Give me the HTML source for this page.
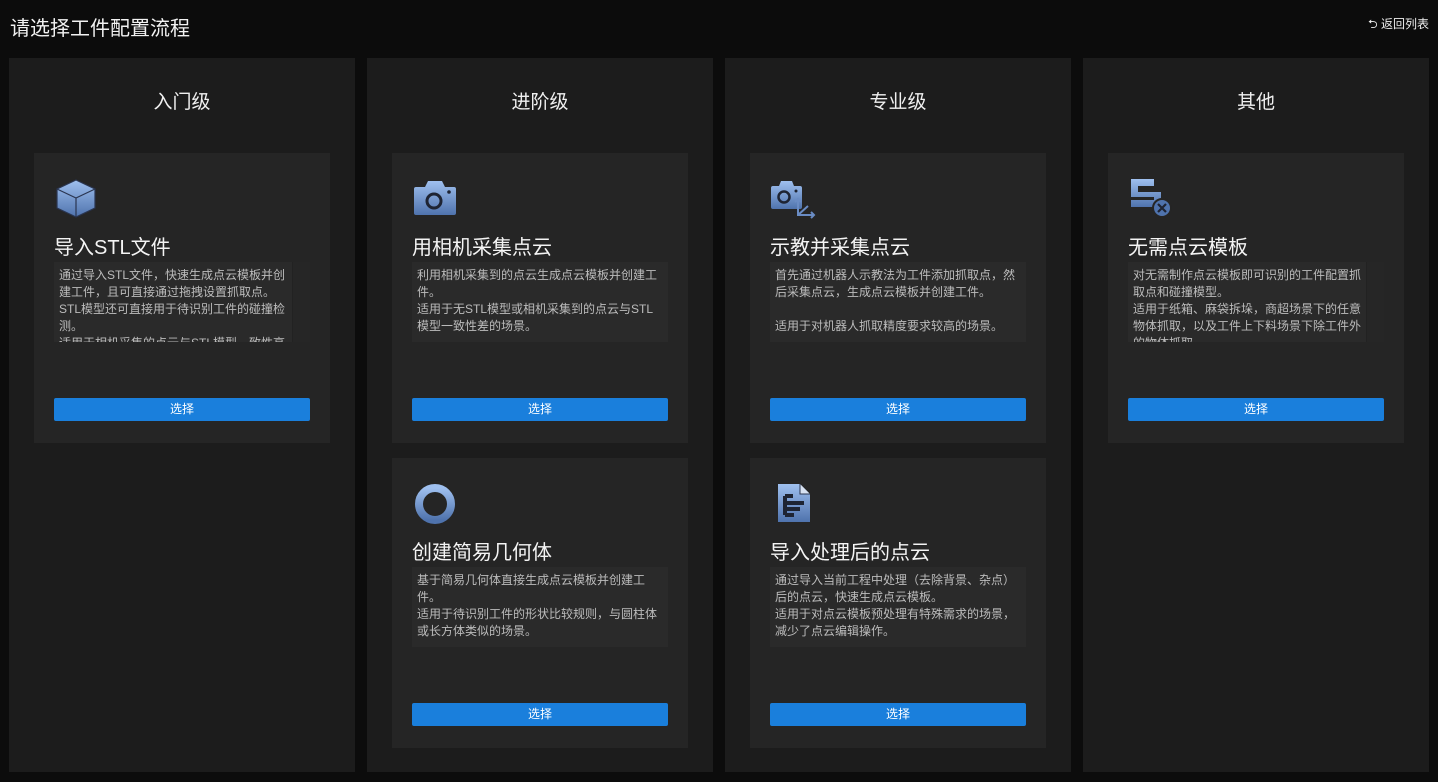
<!DOCTYPE html>
<html><head><meta charset="utf-8"><style>
*{margin:0;padding:0;box-sizing:border-box}
body{width:1438px;height:782px;background:#0c0c0c;font-family:"Liberation Sans","Noto Sans CJK SC",sans-serif;color:#fff;position:relative;overflow:hidden}
.h{position:absolute;left:10px;top:12px;font-size:20px;color:#f2f2f2}
.back{position:absolute;right:9px;top:15px;font-size:12px;color:#eee}
.col{position:absolute;top:58px;width:346px;height:714px;background:#1c1c1c}
.ct{position:absolute;left:0;top:29px;width:346px;text-align:center;font-size:19px;color:#f0f0f0}
.card{position:absolute;width:296px;height:290px;background:#252525}
.card svg{position:absolute;left:20px;top:24px}
.t{position:absolute;left:20px;top:78px;font-size:20px;color:#f4f4f4;white-space:nowrap}
.d{position:absolute;left:20px;top:109px;width:256px;height:80px;background:#2a2a2a;overflow:hidden;font-size:12px;line-height:17px;color:#bcbcbc;padding:5px 5px}
.d.s{padding-right:23px}
.d.s:after{content:"";position:absolute;right:0;top:0;width:17px;height:80px;background:#262626;border-left:1px solid #222}
.b{position:absolute;left:20px;top:245px;width:256px;height:23px;background:#1a7fdc;border-radius:2px;text-align:center;font-size:12px;line-height:23px;color:#fff}
</style></head><body>
<svg width="0" height="0" style="position:absolute"><defs><linearGradient id="g" x1="0" y1="0" x2="0" y2="1"><stop offset="0" stop-color="#9fc0ef"/><stop offset="1" stop-color="#4f73ad"/></linearGradient></defs></svg>
<div class="h">请选择工件配置流程</div>
<div class="back">⮌ 返回列表</div>

<div class="col" style="left:9px"><div class="ct">入门级</div></div>
<div class="col" style="left:367px"><div class="ct">进阶级</div></div>
<div class="col" style="left:725px"><div class="ct">专业级</div></div>
<div class="col" style="left:1083px"><div class="ct">其他</div></div>

<div class="card" style="left:34px;top:153px">
<svg width="44" height="42" viewBox="0 0 44 42"><path d="M22 3 L41 12 L41 31 L22 40 L3 31 L3 12 Z" fill="url(#g)" stroke="#2a3550" stroke-width="1.2"/><path d="M3 12 L22 21 L41 12 M22 21 L22 40" fill="none" stroke="#2a3550" stroke-width="1.2"/></svg>
<div class="t">导入STL文件</div>
<div class="d s">通过导入STL文件，快速生成点云模板并创建工件，且可直接通过拖拽设置抓取点。<br>STL模型还可直接用于待识别工件的碰撞检测。<br>适用于相机采集的点云与STL模型一致性高的场景。</div>
<div class="b">选择</div></div>

<div class="card" style="left:392px;top:153px">
<svg width="46" height="40" viewBox="0 0 46 40"><path d="M4 10 H13 L16 4 H30 L33 10 H42 Q44 10 44 12 V36 Q44 38 42 38 H4 Q2 38 2 36 V12 Q2 10 4 10Z" fill="url(#g)"/><circle cx="22" cy="24" r="7" fill="none" stroke="#1e2433" stroke-width="3"/><circle cx="37" cy="15" r="1.8" fill="#1e2433"/></svg>
<div class="t">用相机采集点云</div>
<div class="d">利用相机采集到的点云生成点云模板并创建工件。<br>适用于无STL模型或相机采集到的点云与STL模型一致性差的场景。</div>
<div class="b">选择</div></div>

<div class="card" style="left:392px;top:458px">
<svg width="46" height="44" viewBox="0 0 46 44"><circle cx="23" cy="22" r="16" fill="none" stroke="url(#g)" stroke-width="8"/></svg>
<div class="t">创建简易几何体</div>
<div class="d">基于简易几何体直接生成点云模板并创建工件。<br>适用于待识别工件的形状比较规则，与圆柱体或长方体类似的场景。</div>
<div class="b">选择</div></div>

<div class="card" style="left:750px;top:153px">
<svg width="46" height="42" viewBox="0 0 46 42"><path d="M3 9 H9 L11 4 H22 L24 9 H30 Q32 9 32 11 V30 Q32 32 30 32 H3 Q1 32 1 30 V11 Q1 9 3 9Z" fill="url(#g)"/><circle cx="14" cy="20" r="5.5" fill="none" stroke="#1e2433" stroke-width="2.5"/><circle cx="26" cy="14" r="1.5" fill="#1e2433"/><path d="M28 22 V38 H44 M28 38 L38 29 M25 25 L28 22 L31 25 M41 35 L44 38 L41 41" fill="none" stroke="#6a8cc4" stroke-width="2"/></svg>
<div class="t">示教并采集点云</div>
<div class="d">首先通过机器人示教法为工件添加抓取点，然后采集点云，生成点云模板并创建工件。<br><br>适用于对机器人抓取精度要求较高的场景。</div>
<div class="b">选择</div></div>

<div class="card" style="left:750px;top:458px">
<svg width="44" height="44" viewBox="0 0 44 44"><path d="M8 2 H30 L40 12 V40 H8 Z" fill="url(#g)"/><path d="M30 2 V12 H40" fill="#d8e2f2" stroke="#2a3550" stroke-width="1"/><path d="M15 14 H23 M15 14 V33 M15 21 H34 M15 27 H30 M15 33 H24" stroke="#1e2433" stroke-width="4" fill="none"/></svg>
<div class="t">导入处理后的点云</div>
<div class="d">通过导入当前工程中处理（去除背景、杂点）后的点云，快速生成点云模板。<br>适用于对点云模板预处理有特殊需求的场景，减少了点云编辑操作。</div>
<div class="b">选择</div></div>

<div class="card" style="left:1108px;top:153px">
<svg width="44" height="42" viewBox="0 0 44 42"><path d="M3 2 H26 V9 H10 V15 H33 V30 H3 V23 H26 V20 H3 Z" fill="url(#g)"/><circle cx="34" cy="31" r="9" fill="#4f73ad" stroke="#252525" stroke-width="2"/><path d="M30 27 L38 35 M38 27 L30 35" stroke="#1e2433" stroke-width="2.2"/></svg>
<div class="t">无需点云模板</div>
<div class="d s">对无需制作点云模板即可识别的工件配置抓取点和碰撞模型。<br>适用于纸箱、麻袋拆垛，商超场景下的任意物体抓取，以及工件上下料场景下除工件外的物体抓取。</div>
<div class="b">选择</div></div>
</body></html>
